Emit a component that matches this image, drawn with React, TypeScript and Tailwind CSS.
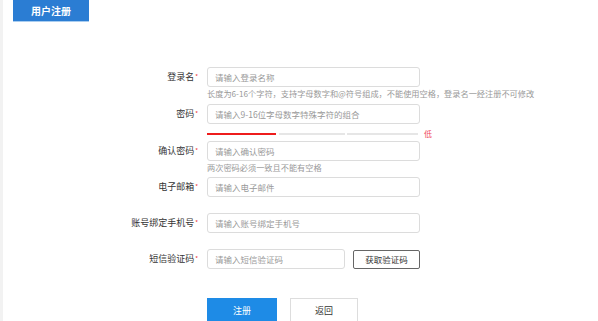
const FONT = "font-['Noto_Sans_CJK_SC','Noto_Sans',sans-serif]";

type Field = {
  label: string;
  placeholder: string;
  hint?: string;
  strength?: boolean;
  sms?: boolean;
  h: string;
};

const fields: Field[] = [
  {
    label: "登录名",
    placeholder: "请输入登录名称",
    hint: "长度为6-16个字符，支持字母数字和@符号组成，不能使用空格，登录名一经注册不可修改",
    h: "h-[37px]",
  },
  { label: "密码", placeholder: "请输入9-16位字母数字特殊字符的组合", strength: true, h: "h-[37px]" },
  { label: "确认密码", placeholder: "请输入确认密码", hint: "两次密码必须一致且不能有空格", h: "h-[36px]" },
  { label: "电子邮箱", placeholder: "请输入电子邮件", h: "h-[36px]" },
  { label: "账号绑定手机号", placeholder: "请输入账号绑定手机号", h: "h-[36px]" },
  { label: "短信验证码", placeholder: "请输入短信验证码", sms: true, h: "h-[49px]" },
];

const Row = ({ f }: { f: Field }) => (
  <div className={`flex ${f.h}`}>
    <div className="w-[195px] h-[20px] flex items-center justify-end text-[9px] text-[#333]">
      {f.label}
      <span className="text-[#e33] text-[6px] -mt-[2px] ml-[1px]">*</span>
    </div>
    <div className="ml-[9px] flex flex-col">
      <div className="flex items-center gap-[8px]">
        <input
          placeholder={f.placeholder}
          className={`${f.sms ? "w-[138px]" : "w-[213px]"} h-[20px] border border-[#dcdcdc] rounded-[3px] px-[7px] text-[8.5px] outline-none placeholder:text-[#999] bg-white`}
        />
        {f.sms && (
          <button className="w-[67px] h-[19px] border border-[#666] rounded-[2px] text-[8.5px] text-[#333] bg-white">
            获取验证码
          </button>
        )}
      </div>
      {f.hint && (
        <div className="text-[8.2px] leading-[10px] mt-[1px] text-[#999] whitespace-nowrap">{f.hint}</div>
      )}
      {f.strength && (
        <div className="flex items-center mt-[3px]">
          <div className="w-[69px] h-[2px] bg-[#ee1c1c]" />
          <div className="w-[66px] h-[2px] bg-[#e6e6e6] ml-[3px]" />
          <div className="w-[71px] h-[2px] bg-[#e6e6e6] ml-[2px]" />
          <span className="ml-[6px] mt-[1px] text-[8px] text-[#f04a5a]">低</span>
        </div>
      )}
    </div>
  </div>
);

export default function App() {
  return (
    <div className={`w-[598px] h-[321px] overflow-hidden bg-[#f2f2f2] pl-[3px] ${FONT}`}>
      <div className="h-full bg-white">
        <div className="pl-[10px]">
          <div className="w-[76px] h-[22px] bg-[#2b7dd3] border-b border-[#a9cdf0] text-white text-[10px] font-bold flex items-center justify-center">
            用户注册
          </div>
        </div>
        <div className="pt-[45px] flex flex-col">
          {fields.map((f) => (
            <Row key={f.label} f={f} />
          ))}
          <div className="flex ml-[204px] gap-[13px]">
            <button className="w-[70px] h-[26px] bg-[#1e8be6] text-white text-[9px]">注册</button>
            <button className="w-[68px] h-[26px] bg-white border border-[#ddd] text-[#333] text-[9px]">返回</button>
          </div>
        </div>
      </div>
    </div>
  );
}
